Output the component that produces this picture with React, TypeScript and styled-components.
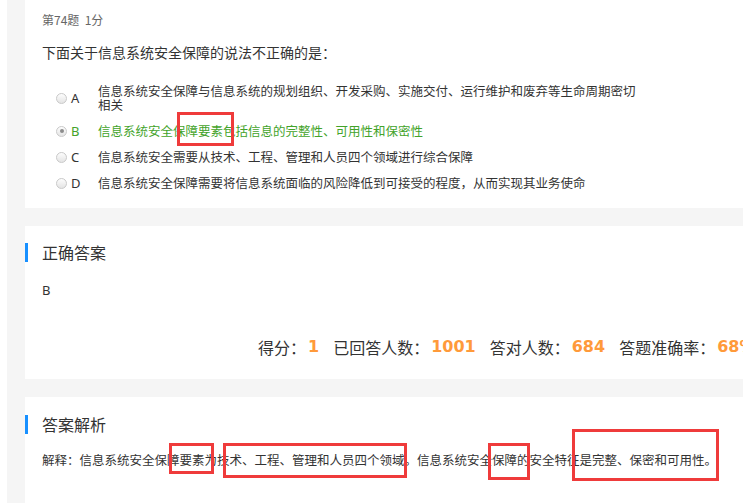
import React from 'react';
import styled, { createGlobalStyle } from 'styled-components';

const GlobalStyle = createGlobalStyle`
  html, body {
    margin: 0;
    padding: 0;
    background: #fff;
    overflow: hidden;
  }
  body {
    font-family: "Noto Sans CJK SC", "Noto Sans", sans-serif;
    color: #333;
  }
`;

const Page = styled.div`
  position: relative;
  width: 743px;
  height: 503px;
  overflow: hidden;
`;

const Main = styled.main`
  margin-left: 7px;
  padding-left: 18px;
  height: 503px;
  background: #f5f5f5;
`;

const Card = styled.section<{ $pt: number; $pb: number }>`
  background: #fff;
  padding: ${p => p.$pt}px 0 ${p => p.$pb}px 17px;
  margin-bottom: 18px;
  white-space: nowrap;
`;

const Meta = styled.div`
  font-size: 12px;
  line-height: 16px;
  color: #666;
`;

const Question = styled.div`
  margin-top: 14px;
  font-size: 14px;
  line-height: 20px;
  color: #333;
`;

const Options = styled.div`
  margin-top: 16px;
`;

const OptionRow = styled.div<{ $correct?: boolean }>`
  display: flex;
  align-items: center;
  padding: 6px 0;
  font-size: 12.5px;
  line-height: 14px;
  color: ${p => (p.$correct ? '#43a32a' : '#333')};
`;

const Radio = styled.span<{ $checked?: boolean }>`
  position: relative;
  flex: none;
  box-sizing: border-box;
  width: 11px;
  height: 11px;
  margin-left: 14px;
  border-radius: 50%;
  border: 1px solid #c9c9c9;
  background: linear-gradient(#fdfdfd, #e4e4e4);
  &::after {
    content: '';
    display: ${p => (p.$checked ? 'block' : 'none')};
    position: absolute;
    left: 2.5px;
    top: 2.5px;
    width: 4px;
    height: 4px;
    border-radius: 50%;
    background: #8c8c8c;
  }
`;

const Letter = styled.span`
  flex: none;
  width: 27px;
  margin-left: 4px;
  font-size: 13px;
  font-family: "Noto Sans", sans-serif;
`;

const OptionText = styled.span`
  width: 545px;
  white-space: normal;
`;

const SectionTitle = styled.h3`
  position: relative;
  margin: 0;
  font-size: 16px;
  font-weight: normal;
  line-height: 19px;
  color: #333;
  &::before {
    content: '';
    position: absolute;
    left: -17px;
    top: 0;
    width: 3px;
    height: 19px;
    background: #1890ff;
  }
`;

const Answer = styled.div`
  margin-top: 20px;
  font-size: 13px;
  line-height: 16px;
  font-family: "Noto Sans", sans-serif;
`;

const Stats = styled.div`
  display: flex;
  margin-top: 38px;
  padding-left: 216px;
  font-size: 16px;
  line-height: 22px;
`;

const Stat = styled.span`
  display: flex;
  margin-right: 14px;
`;

const StatNum = styled.b`
  margin-left: 2px;
  font-family: "DejaVu Sans", sans-serif;
  font-weight: bold;
  color: #ff9a3a;
`;

const Explain = styled.p`
  margin: 18px 0 0;
  font-size: 12.5px;
  line-height: 16px;
  color: #333;
`;

const Mark = styled.div<{ $x: number; $y: number; $w: number; $h: number }>`
  position: absolute;
  left: ${p => p.$x}px;
  top: ${p => p.$y}px;
  width: ${p => p.$w}px;
  height: ${p => p.$h}px;
  box-sizing: border-box;
  border: 3px solid #ef3b3b;
  pointer-events: none;
`;

const options = [
  { key: 'A', text: '信息系统安全保障与信息系统的规划组织、开发采购、实施交付、运行维护和废弃等生命周期密切相关' },
  { key: 'B', text: '信息系统安全保障要素包括信息的完整性、可用性和保密性', checked: true },
  { key: 'C', text: '信息系统安全需要从技术、工程、管理和人员四个领域进行综合保障' },
  { key: 'D', text: '信息系统安全保障需要将信息系统面临的风险降低到可接受的程度，从而实现其业务使命' },
];

const stats = [
  { label: '得分：', value: '1' },
  { label: '已回答人数：', value: '1001' },
  { label: '答对人数：', value: '684' },
  { label: '答题准确率：', value: '68%' },
];

const marks = [
  { x: 177, y: 112, w: 57, h: 34 },
  { x: 169, y: 443, w: 45, h: 31 },
  { x: 223, y: 443, w: 184, h: 35 },
  { x: 488, y: 443, w: 42, h: 37 },
  { x: 572, y: 429, w: 147, h: 52 },
];

const App = () => (
  <Page>
    <GlobalStyle />
    <Main>
      <Card $pt={12} $pb={12}>
        <Meta>第74题&nbsp;&nbsp;1分</Meta>
        <Question>下面关于信息系统安全保障的说法不正确的是：</Question>
        <Options>
          {options.map(o => (
            <OptionRow key={o.key} $correct={o.checked}>
              <Radio $checked={o.checked} />
              <Letter>{o.key}</Letter>
              <OptionText>{o.text}</OptionText>
            </OptionRow>
          ))}
        </Options>
      </Card>
      <Card $pt={17} $pb={21}>
        <SectionTitle>正确答案</SectionTitle>
        <Answer>B</Answer>
        <Stats>
          {stats.map(s => (
            <Stat key={s.label}>
              {s.label}
              <StatNum>{s.value}</StatNum>
            </Stat>
          ))}
        </Stats>
      </Card>
      <Card $pt={18} $pb={40}>
        <SectionTitle>答案解析</SectionTitle>
        <Explain>
          解释：信息系统安全保障要素为技术、工程、管理和人员四个领域。信息系统安全保障的安全特征是完整、保密和可用性。
        </Explain>
      </Card>
    </Main>
    {marks.map((m, i) => (
      <Mark key={i} $x={m.x} $y={m.y} $w={m.w} $h={m.h} />
    ))}
  </Page>
);

export default App;
